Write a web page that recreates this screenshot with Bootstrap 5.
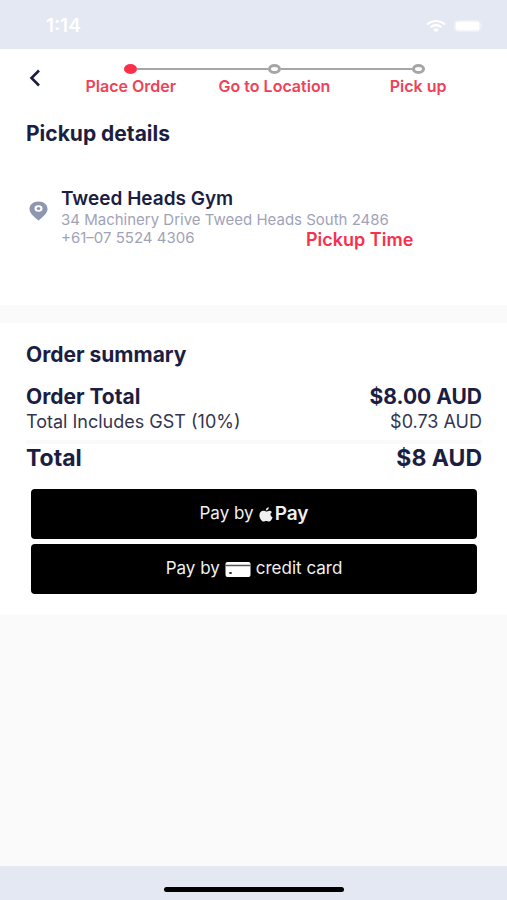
<!DOCTYPE html>
<html lang="en">
<head>
<meta charset="utf-8">
<meta name="viewport" content="width=device-width, initial-scale=1">
<title>Pickup order</title>
<link href="https://cdn.jsdelivr.net/npm/bootstrap@5.3.0/dist/css/bootstrap.min.css" rel="stylesheet">
<style>
  :root { --ink: #1c1d42; --accent: #f9304a; --muted-ink: #9fa3b8; --bar: #e4e8f3; --line: #a6a6a6; }
  body { font-family: Inter, "Liberation Sans", sans-serif; color: var(--ink); background: #fafafa; }
  svg { display: block; flex: none; }
  .status-bar { background: var(--bar); height: 49px; padding: 2px 24px 0 46px; }
  .clock { font-size: 19px; line-height: 24px; }
  .top-nav { padding: 15px 17px 0 24px; }
  .back-btn { width: 24px; height: 28px; margin-right: 11px; }
  .steps { font-size: 16px; line-height: 20px; color: #ee4259; }
  .step-track { height: 10px; }
  .step-label { margin-top: 2px; }
  .step-line { height: 2px; background: var(--line); }
  .step-dot { width: 13px; height: 10px; border: 3px solid var(--line); border-radius: 50%; }
  .step-dot.done { background: var(--accent); border-color: var(--accent); }
  .pickup { padding: 25px 25px 54px 26px; }
  .title { font-size: 21px; line-height: 26px; }
  .place { margin-top: 40px; gap: 13px; }
  .place-pin { margin-top: 14px; }
  .place-name { font-size: 19px; line-height: 24px; }
  .place-info { font-size: 15px; line-height: 18px; color: var(--muted-ink); }
  .phone { width: 245px; }
  .pickup-time { font-size: 18px; line-height: 22px; color: var(--accent); }
  .summary { margin-top: 18px; padding: 19px 25px 21px 26px; }
  .totals { margin-top: 16px; }
  .row-main { font-size: 21px; line-height: 26px; }
  .row-sub { font-size: 18px; line-height: 24px; color: #34354f; }
  .row-grand { font-size: 23px; line-height: 28px; border-top: 4px solid #fafafa; margin-top: 6px; }
  .pay-list { margin: 17px 5px 0; gap: 5px; }
  .pay-btn { height: 50px; background: #000; color: #f0f0f0; border: 0; border-radius: 4px; font-size: 17px; gap: 5px; }
  .pay-btn:hover { background: #222; color: #fff; }
  .apple-pay { font-size: 19px; line-height: 24px; gap: 2px; }
  .home-area { background: var(--bar); height: 34px; padding-top: 21px; }
  .home-bar { width: 180px; height: 5px; background: #000; }
</style>
<script defer src="https://cdn.jsdelivr.net/npm/bootstrap@5.3.0/dist/js/bootstrap.bundle.min.js"></script>
</head>
<body class="d-flex flex-column min-vh-100">
  <div class="status-bar d-flex align-items-center justify-content-between text-white">
    <span class="clock fw-semibold">1:14</span>
    <span class="d-flex align-items-center gap-2">
      <svg width="20" height="12" viewBox="0 0 20 12" fill="none" stroke="#fff" stroke-width="2" aria-hidden="true"><path d="M1 4.400Q10-2.600 19 4.400M4.500 7.300Q10 3 15.500 7.300"/><ellipse cx="10" cy="10" rx="2.400" ry="1.800" fill="#fff" stroke="none"/></svg>
      <svg width="29" height="12" viewBox="0 0 29 12" aria-hidden="true"><rect x=".5" y=".5" width="26" height="11" rx="3" fill="none" stroke="#edf0f7"/><rect x="1.500" y="1.500" width="24" height="9" rx="2" fill="#fff"/><path d="M27.500 4Q29 6 27.500 8z" fill="#f3f5fa"/></svg>
    </span>
  </div>

  <main class="flex-grow-1">
    <div class="bg-white">
      <header class="top-nav d-flex align-items-start">
        <button type="button" class="back-btn btn p-0 border-0" aria-label="Back">
          <svg width="24" height="28" viewBox="0 0 24 28" fill="none" stroke="#1c1d42" stroke-width="2.600" aria-hidden="true"><path d="M15 6.500 7.500 14 15 21.500"/></svg>
        </button>
        <ol class="steps list-unstyled d-flex flex-grow-1 text-center fw-semibold mb-0">
          <li class="col-4">
            <div class="step-track d-flex align-items-center"><span class="flex-fill"></span><span class="step-dot done"></span><span class="step-line flex-fill"></span></div>
            <div class="step-label">Place Order</div>
          </li>
          <li class="col-4">
            <div class="step-track d-flex align-items-center"><span class="step-line flex-fill"></span><span class="step-dot"></span><span class="step-line flex-fill"></span></div>
            <div class="step-label">Go to Location</div>
          </li>
          <li class="col-4">
            <div class="step-track d-flex align-items-center"><span class="step-line flex-fill"></span><span class="step-dot"></span><span class="flex-fill"></span></div>
            <div class="step-label">Pick up</div>
          </li>
        </ol>
      </header>

      <section class="pickup">
        <h1 class="title fw-bold mb-0">Pickup details</h1>
        <div class="place d-flex">
          <svg class="place-pin" width="22" height="20" viewBox="0 0 22 20" aria-hidden="true"><path d="M12.500 .5C7 .5 3.500 3.800 3.500 8c0 4.200 3.800 7.200 9 11.500 5.200-4.300 9-7.300 9-11.500 0-4.200-3.500-7.500-9-7.500z" fill="#8f96b0"/><ellipse cx="12.500" cy="7.500" rx="4" ry="3.300" fill="#fff"/><ellipse cx="12.500" cy="7.500" rx="1.800" ry="1.500" fill="#8f96b0"/></svg>
          <div class="flex-grow-1">
            <h2 class="place-name fw-semibold mb-0">Tweed Heads Gym</h2>
            <div class="place-info">34 Machinery Drive Tweed Heads South 2486</div>
            <div class="d-flex">
              <div class="place-info phone">+61–07 5524 4306</div>
              <div class="pickup-time fw-semibold">Pickup Time</div>
            </div>
          </div>
        </div>
      </section>
    </div>

    <section class="summary bg-white">
      <h2 class="title fw-bold mb-0">Order summary</h2>
      <dl class="totals mb-0">
        <div class="row-main d-flex justify-content-between"><dt class="fw-bold">Order Total</dt><dd class="fw-bold mb-0">$8.00 AUD</dd></div>
        <div class="row-sub d-flex justify-content-between"><dt class="fw-normal">Total Includes GST (10%)</dt><dd class="mb-0">$0.73 AUD</dd></div>
        <div class="row-grand d-flex justify-content-between"><dt class="fw-bold">Total</dt><dd class="fw-bold mb-0">$8 AUD</dd></div>
      </dl>
      <div class="pay-list d-flex flex-column">
        <button type="button" class="pay-btn btn d-flex align-items-center justify-content-center">
          <span>Pay by</span>
          <span class="apple-pay d-flex align-items-center fw-semibold"><svg width="14" height="15" viewBox="0 0 14 15" fill="#f0f0f0" aria-hidden="true"><path d="M9.800.200c.100 1.700-1.200 3.200-3 3.200C6.700 1.800 8.100.400 9.800.200zM12.900 5.200c-2.100 1.300-1.800 4 .700 5-.700 1.900-2 4.400-3.600 4.400-1.100 0-1.500-.600-2.800-.600s-1.700.600-2.700.600C2.600 14.600.400 11.300.400 8.300c0-2.900 1.900-4.500 3.900-4.500 1.200 0 2.100.700 2.900.700s1.900-.8 3.300-.8c1 0 1.900.5 2.400 1.500z"/></svg>Pay</span>
        </button>
        <button type="button" class="pay-btn btn d-flex align-items-center justify-content-center">
          <span>Pay by</span>
          <svg width="26" height="15" viewBox="0 0 26 15" aria-hidden="true"><rect x=".5" width="25" height="15" rx="2" fill="#fff"/><path d="M.5 3.500h25" stroke="#555" stroke-width="1.500"/><ellipse cx="5.500" cy="11" rx="1.500" ry="1.100" fill="#222"/></svg>
          <span>credit card</span>
        </button>
      </div>
    </section>
  </main>

  <footer class="home-area"><div class="home-bar rounded-pill mx-auto" aria-hidden="true"></div></footer>
</body>
</html>
